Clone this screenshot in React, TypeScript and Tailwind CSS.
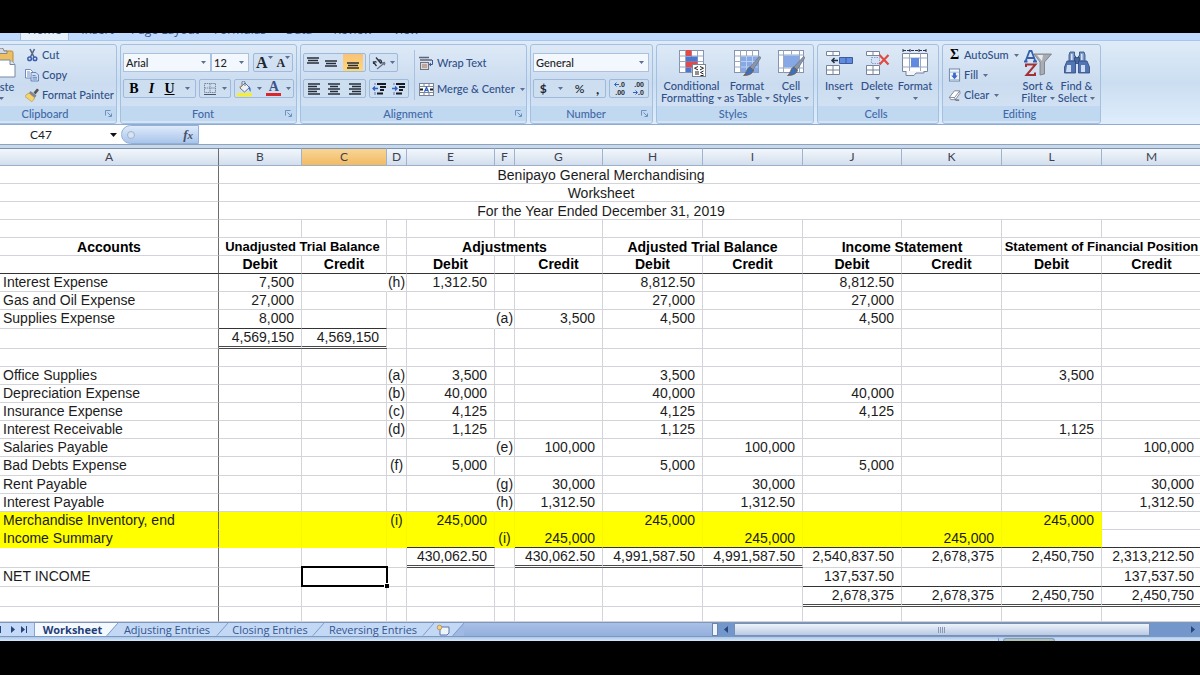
import React, { useState } from 'react';
import clsx from 'clsx';

type Col = 'A' | 'B' | 'C' | 'D' | 'E' | 'F' | 'G' | 'H' | 'I' | 'J' | 'K' | 'L' | 'M';

interface SheetRow {
  cells?: Partial<Record<Col, string>>;
  height?: string;
  highlight?: boolean;
  single?: string;
  double?: string;
  bold?: boolean;
  selected?: Col;
}

const COLUMNS: { id: Col; width: string }[] = [
  { id: 'A', width: 'w-[219px]' },
  { id: 'B', width: 'w-[83px]' },
  { id: 'C', width: 'w-[85px]' },
  { id: 'D', width: 'w-[20px]' },
  { id: 'E', width: 'w-[88px]' },
  { id: 'F', width: 'w-[20px]' },
  { id: 'G', width: 'w-[88px]' },
  { id: 'H', width: 'w-[100px]' },
  { id: 'I', width: 'w-[100px]' },
  { id: 'J', width: 'w-[99px]' },
  { id: 'K', width: 'w-[100px]' },
  { id: 'L', width: 'w-[100px]' },
  { id: 'M', width: 'w-[100px]' },
];

const TITLES = ['Benipayo General Merchandising', 'Worksheet', 'For the Year Ended December 31, 2019'];

const ROWS: SheetRow[] = [
  {
    cells: { B: 'Debit', C: 'Credit', E: 'Debit', G: 'Credit', H: 'Debit', I: 'Credit', J: 'Debit', K: 'Credit', L: 'Debit', M: 'Credit' },
    bold: true,
    single: 'ABCDEFGHIJKLM',
  },
  { cells: { A: 'Interest Expense', B: '7,500', D: '(h)', E: '1,312.50', H: '8,812.50', J: '8,812.50' } },
  { cells: { A: 'Gas and Oil Expense', B: '27,000', H: '27,000', J: '27,000' } },
  { cells: { A: 'Supplies Expense', B: '8,000', F: '(a)', G: '3,500', H: '4,500', J: '4,500' }, height: 'h-[19px]', single: 'BC' },
  { cells: { B: '4,569,150', C: '4,569,150' }, height: 'h-[20px]', double: 'BC' },
  { height: 'h-[18px]' },
  { cells: { A: 'Office Supplies', D: '(a)', E: '3,500', H: '3,500', L: '3,500' } },
  { cells: { A: 'Depreciation Expense', D: '(b)', E: '40,000', H: '40,000', J: '40,000' } },
  { cells: { A: 'Insurance Expense', D: '(c)', E: '4,125', H: '4,125', J: '4,125' } },
  { cells: { A: 'Interest Receivable', D: '(d)', E: '1,125', H: '1,125', L: '1,125' } },
  { cells: { A: 'Salaries Payable', F: '(e)', G: '100,000', I: '100,000', M: '100,000' } },
  { cells: { A: 'Bad Debts Expense', D: '(f)', E: '5,000', H: '5,000', J: '5,000' }, height: 'h-[19px]' },
  { cells: { A: 'Rent Payable', F: '(g)', G: '30,000', I: '30,000', M: '30,000' } },
  { cells: { A: 'Interest Payable', F: '(h)', G: '1,312.50', I: '1,312.50', M: '1,312.50' } },
  { cells: { A: 'Merchandise Inventory, end', D: '(i)', E: '245,000', H: '245,000', L: '245,000' }, highlight: true },
  { cells: { A: 'Income Summary', F: '(i)', G: '245,000', I: '245,000', K: '245,000' }, highlight: true, single: 'EGHIJKLM' },
  {
    cells: { E: '430,062.50', G: '430,062.50', H: '4,991,587.50', I: '4,991,587.50', J: '2,540,837.50', K: '2,678,375', L: '2,450,750', M: '2,313,212.50' },
    height: 'h-[20px]',
    double: 'EGHI',
  },
  { cells: { A: 'NET INCOME', J: '137,537.50', M: '137,537.50' }, height: 'h-[19px]', single: 'JKLM', selected: 'C' },
  { cells: { J: '2,678,375', K: '2,678,375', L: '2,450,750', M: '2,450,750' }, height: 'h-[20px]', double: 'JKLM' },
  { height: 'h-[15px]' },
];

const Caret: React.FC<{ className?: string }> = ({ className }) => (
  <svg viewBox="0 0 5 3" className={clsx('w-[5px] h-[3px] shrink-0', className)} fill="#5b6f91">
    <path d="M0 0h5L2.5 3z" />
  </svg>
);

/* ---------- icons ---------- */

const CutIcon = () => (
  <svg viewBox="0 0 14 14" className="w-[14px] h-[14px]" fill="none">
    <path d="M5 1l4 8M9.500 1L5.500 9" stroke="#56678c" strokeWidth="1.600" />
    <circle cx="4.600" cy="10.800" r="1.800" stroke="#3a5fae" strokeWidth="1.500" />
    <circle cx="10" cy="10.800" r="1.800" stroke="#3a5fae" strokeWidth="1.500" />
  </svg>
);

const CopyIcon = () => (
  <svg viewBox="0 0 14 14" className="w-[14px] h-[14px]" stroke="#5f7db5" strokeWidth=".9">
    <path d="M.5 1.500h5l2 2V10h-7z" fill="#fff" />
    <path d="M2 4h3M2 6h3M2 8h3" />
    <path d="M6 4.500h5l2.500 2.500V13H6z" fill="#cfe0f8" />
    <path d="M7.500 7.500h3M7.500 9.300h4.500M7.500 11h4.500" />
  </svg>
);

const PainterIcon = () => (
  <svg viewBox="0 0 14 14" className="w-[14px] h-[14px]">
    <path d="M8.500 4.500L12 .5l2 1.500-3.500 4.500z" fill="#5d5148" />
    <path d="M5.500 3l6 4.500-1.800 2.500-6-4.500z" fill="#7d879c" />
    <path d="M4 5L1.500 6.500 0 8.500l6.500 5c1.500-.6 2.700-2 3-3.800z" fill="#f5d470" stroke="#b58a30" strokeWidth=".6" />
  </svg>
);

const PasteIcon = () => (
  <svg viewBox="0 0 30 30" className="w-[30px] h-[30px]">
    <rect x="2" y="3" width="25" height="23" rx="1.500" fill="#ecbf62" stroke="#b98d3f" />
    <path d="M9 5.500V3h3a3 3 0 016 0h3v2.500z" fill="#d5d8de" stroke="#6e7684" strokeWidth=".8" />
    <path d="M12 12h12l5 4.500V29H12z" fill="#fff" stroke="#7688a6" />
    <path d="M24 12v4.500h5" fill="#dbe6f5" stroke="#7688a6" />
  </svg>
);

const Lines: React.FC<{ rows: [number, number, number][] }> = ({ rows }) => (
  <svg viewBox="0 0 14 14" className="w-[14px] h-[14px]" stroke="#262c38" strokeWidth="1.400">
    {rows.map(([x1, x2, y]) => (
      <path key={y} d={`M${x1} ${y}H${x2}`} />
    ))}
  </svg>
);

const OrientationIcon = () => (
  <svg viewBox="0 0 14 14" className="w-[14px] h-[14px]" fill="none" stroke="#2c3340" strokeWidth="1.300">
    <path d="M1 5.500l3.500 4.500M1.500 8c0-2.500 2-3 3-1.500M4 1.500l5 6M6.500 4.500c2-1.500 4 .5 2.500 3" />
    <path d="M5 13L13 6.500M13 6.500l-3 .3M13 6.500l-.8 2.800" stroke="#6b7486" />
  </svg>
);

const IndentIcon: React.FC<{ flip?: boolean }> = ({ flip }) => (
  <svg viewBox="0 0 15 14" className="w-[15px] h-[14px]" fill="none" stroke="#171b25" strokeWidth="1.800">
    <path d="M5 2h9M8 5h6M8 8h4M5 11.500h6" />
    <path d={flip ? 'M1 6.500h5M4 4.500l2 2-2 2' : 'M6 6.500H1M3 4.500l-2 2 2 2'} stroke="#2f5fc0" strokeWidth="1.300" />
    <path d="M3 1v2M3 10v3" stroke="#5b79b5" strokeWidth="1" />
  </svg>
);

const WrapIcon = () => (
  <svg viewBox="0 0 15 15" className="w-[15px] h-[15px]" fill="none">
    <path d="M0 1.500h10M1 4h12" stroke="#5d6679" strokeWidth="1.500" />
    <rect x="1.500" y="6.500" width="8" height="7" fill="#e3d8d0" stroke="#6b7486" />
    <path d="M3 9h5M3 11h5" stroke="#95776c" />
    <path d="M13.500 4v4.500h-3M12 7l-1.800 1.500L12 10" stroke="#3a5796" />
  </svg>
);

const MergeIcon = () => (
  <svg viewBox="0 0 15 15" className="w-[15px] h-[15px]" fill="none">
    <rect x=".5" y="1.500" width="14" height="12" fill="#fff" stroke="#7a8499" />
    <path d="M.5 4.500h14M.5 10.500h14M5 1.500v3M10 1.500v3M5 10.500v3M10 10.500v3" stroke="#7a8499" />
    <path d="M1 7.500h3M14 7.500h-3" stroke="#171b25" strokeWidth="2" />
    <path d="M5.500 9.800l2-4.500 2 4.500M6.300 8.300h2.400" stroke="#2f5fc0" strokeWidth="1.200" />
  </svg>
);

const BordersIcon = () => (
  <svg viewBox="0 0 14 14" className="w-[14px] h-[14px]" fill="none">
    <path d="M1.500 1.500h11v9h-11zM7 1.500v9M1.500 6h11" stroke="#7c879b" strokeDasharray="1.500 .7" />
    <path d="M1 12.500h12" stroke="#4b5468" strokeWidth="1.200" />
  </svg>
);

const FillColorIcon = () => (
  <svg viewBox="0 0 15 16" className="w-[15px] h-[16px]">
    <rect x="0" y="12" width="15" height="3.500" fill="#f4ee3a" />
    <path d="M3 7l5-5 4.500 4.500-5 4.500z" fill="#eef2f8" stroke="#68758f" />
    <path d="M5 5V1.500a1.500 1.500 0 013 0V5" fill="none" stroke="#68758f" />
    <path d="M11.500 5c2 1 2.500 3 2 6-1-1.500-1.800-2.800-2-6z" fill="#3d6bb8" />
    <path d="M2 6c2-2 3-1 5-3L3 7z" fill="#c79c3c" />
  </svg>
);

const SigmaIcon = () => <span className="w-[13px] text-center text-[14px] leading-[14px] font-bold text-black font-['Liberation_Serif',serif]">Σ</span>;

const FillDownIcon = () => (
  <svg viewBox="0 0 14 14" className="w-[13px] h-[14px]">
    <rect x="1.500" y=".5" width="11" height="13" fill="#eef5fd" stroke="#6a80a5" />
    <path d="M2 4h10M2 12h10" stroke="#a9bcd8" />
    <path d="M5.500 4.500h3V7.500h2L7 11.500 3.500 7.500h2z" fill="#3c69ce" />
  </svg>
);

const EraserIcon = () => (
  <svg viewBox="0 0 14 14" className="w-[13px] h-[14px]">
    <path d="M1.500 9.500L7 2.500h5.500L13 5l-5 7H3z" fill="#fff" stroke="#6b7587" strokeWidth=".9" />
    <path d="M1.500 9.500l5.500.3 5.500-7M7 9.800L8 12" fill="none" stroke="#6b7587" strokeWidth=".9" />
    <path d="M8 12.500h4" stroke="#333" />
  </svg>
);

const GridBase = () => (
  <>
    <rect x="1.500" y="1.500" width="24" height="22" fill="#fff" stroke="#8594b0" />
    <path d="M7.500 1.500v22M13.500 1.500v22M19.500 1.500v22M1.500 7h24M1.500 12.500h24M1.500 18h24" stroke="#9aa8c2" />
  </>
);

const Brush = () => (
  <>
    <path d="M26.500 7.500l1.500 1-8 12.500-3.500-2.500z" fill="#8b95a8" stroke="#5f6a80" strokeWidth=".6" />
    <path d="M16.500 18l4 3c-.5 3.500-4 5.500-10 5.500 3-1.500 2.500-6.500 6-8.500z" fill="#3f6fb9" stroke="#7e5a34" strokeWidth=".8" />
  </>
);

const ConditionalIcon = () => (
  <svg viewBox="0 0 28 28" className="w-7 h-7">
    <GridBase />
    <path d="M8 1h5.500v6H8zM8 12.500h11.500v6H8z" fill="#e04a4a" />
    <path d="M8 7.500h11.500v5H8zM8 18.500h5V23H8z" fill="#4d76cf" />
    <rect x="14.500" y="15.500" width="13" height="12" fill="#fff" stroke="#7b8496" />
    <path d="M20 17.500l-3.500 1.700 3.500 1.700M22 17.500l3.500 1.700-3.500 1.700M17 23h4M17 25h4M25.500 22l-3 1.500 3 1.500M22.500 26.500h3" fill="none" stroke="#222" strokeWidth="1" />
  </svg>
);

const TableIcon = () => (
  <svg viewBox="0 0 28 28" className="w-7 h-7">
    <GridBase />
    <path d="M8 7.500h17.500v16H8z" fill="#86a9e6" />
    <path d="M13.500 7v17M19.500 7v17M8 12.500h17M8 18h17" stroke="#b9cff2" />
    <Brush />
  </svg>
);

const CellStylesIcon = () => (
  <svg viewBox="0 0 28 28" className="w-7 h-7">
    <rect x="1.500" y="1.500" width="25" height="22" fill="#fff" stroke="#8594b0" />
    <path d="M6.500 1.500v22M22.500 1.500v22M1.500 6h25M1.500 19h25M14.500 1.500v4M14.500 19v4" stroke="#9aa8c2" />
    <path d="M7 6.500h15v12H7z" fill="#86a9e6" />
    <Brush />
  </svg>
);

const InsertIcon = () => (
  <svg viewBox="0 0 28 28" className="w-7 h-7">
    <path d="M1.500 2.500h13v4h-13zM8 2.500v4M1.500 16.500h13v9h-13zM8 16.500v9M1.500 21h13" fill="#fff" stroke="#78849b" />
    <path d="M14.500 8.500h13v6h-13z" fill="#5f8be0" stroke="#3c5a9c" />
    <path d="M21 9v5.500" stroke="#3c5a9c" />
    <path d="M13 11.500H6.500M9.500 9L7 11.500 9.500 14" fill="none" stroke="#26304a" strokeWidth="1.500" />
  </svg>
);

const DeleteIcon = () => (
  <svg viewBox="0 0 28 28" className="w-7 h-7">
    <path d="M3.500 2.500h13v4h-13zM10 2.500v4M3.500 16.500h13v9h-13zM10 16.500v9M3.500 21h13" fill="#fff" stroke="#78849b" />
    <path d="M8.500 8.500h8v6h-8z" fill="#d5e2f5" stroke="#8ba0c4" strokeDasharray="1.500 1" />
    <path d="M16.500 6l9 9.500M25.500 6l-9 9.500" stroke="#e2493f" strokeWidth="2.200" />
  </svg>
);

const FormatIcon = () => (
  <svg viewBox="0 0 28 28" className="w-7 h-7">
    <path d="M2 1.500h23M2 0v3M25 0v3M9 0v3M18 0v3" stroke="#26304a" strokeDasharray="3 1" />
    <path d="M1.500 4.500h25v18h-25z" fill="#fff" stroke="#78849b" />
    <path d="M8.500 4.500v18M19.500 4.500v18M1.500 9h25M1.500 18h25" stroke="#9aa8c2" />
    <rect x="10" y="9" width="8" height="9" fill="#5f8be0" />
    <path d="M5 22v4.500h8l2-2.500h8v-2" fill="#f4f6fa" stroke="#78849b" />
  </svg>
);

const SortIcon = () => (
  <svg viewBox="0 0 28 28" className="w-7 h-7">
    <path d="M10 5h17.500L20.500 13v12l-4.500 1V13z" fill="#a9acb2" stroke="#72767e" strokeWidth=".8" />
    <path d="M13 6h6l-1 6z" fill="#e8eaee" />
    <path d="M1.500 12.500L5.500 2h2L11.500 12.500M3.500 9h7M0 12.500h3.500M9 12.500h4" fill="none" stroke="#3560ab" strokeWidth="1.800" />
    <path d="M2 18v-2.500h9.500L2.500 26H11v-2.500" fill="none" stroke="#a33236" strokeWidth="2" />
  </svg>
);

const FindIcon = () => (
  <svg viewBox="0 0 28 28" className="w-7 h-7" stroke="#2b467a" strokeWidth=".8">
    <path d="M7 3h4.500v4h1v6H6V6zM16.500 3H21l1 3v7h-6.500V7h1z" fill="#7b98cb" />
    <path d="M11.500 8.500h5v6h-5z" fill="#4a689f" />
    <path d="M4 12h8.500v12H1.500V18zM24 12h-8.500v12h11V18z" fill="#5175b4" />
    <path d="M4 16h4v7H3zM18 16h4v7h-4z" fill="#cddcf3" stroke="none" />
    <path d="M8 5h1.500v6H8zM18 5h1.500v6H18z" fill="#dbe6f7" stroke="none" />
  </svg>
);

const LauncherIcon = () => (
  <svg viewBox="0 0 7 7" className="w-[7px] h-[7px]" fill="none" stroke="#6f8fbd">
    <path d="M.5 5.500v-5h5M2.500 2.500l3.500 3.500M6.500 3.500v3h-3" />
  </svg>
);

/* ---------- ribbon ---------- */

const Group: React.FC<{ title: string; className: string; launcher?: boolean; children: React.ReactNode }> = ({ title, className, launcher, children }) => (
  <section
    aria-label={title}
    className={clsx('shrink-0 flex flex-col rounded-[3px] border border-[#a3c0e0] bg-linear-to-b from-[#dde9f6] via-[#cbdcf0] to-[#d6e5f5] overflow-hidden', className)}
  >
    <div className="h-[61px] flex">{children}</div>
    <div className="h-[15px] flex items-center bg-[#c1d8f1] text-[#4268a6] pr-1">
      <span className="flex-1 text-center">{title}</span>
      {launcher && (
        <button aria-label={`${title} settings`}>
          <LauncherIcon />
        </button>
      )}
    </div>
  </section>
);

const Box: React.FC<{ className: string; children: React.ReactNode }> = ({ className, children }) => (
  <div className={clsx('h-[19px] flex items-center justify-around rounded-[2px] border border-[#9fb9da] bg-[#cfdff2]/60', className)}>{children}</div>
);

const SmallButton: React.FC<{ icon: React.ReactNode; label: string; caret?: boolean }> = ({ icon, label, caret }) => (
  <button className="h-5 flex items-center gap-[3px] whitespace-nowrap">
    {icon}
    {label}
    {caret && <Caret className="ml-[2px]" />}
  </button>
);

const BigButton: React.FC<{ icon: React.ReactNode; first: string; second?: string; className: string }> = ({ icon, first, second, className }) => (
  <button className={clsx('shrink-0 flex flex-col items-center pt-1 whitespace-nowrap leading-[12px]', className)}>
    {icon}
    <span className="mt-[3px]">{first}</span>
    <span className="h-3 flex items-center gap-[3px]">
      {second}
      <Caret />
    </span>
  </button>
);

const Picker: React.FC<{ label: string; options: string[]; className: string }> = ({ label, options, className }) => (
  <div className={clsx('relative h-[19px]', className)}>
    <select aria-label={label} className="w-full h-full appearance-none border border-[#abc1de] bg-[#f3f8fe] pl-[2px] text-[11px] leading-4 text-[#222] outline-none">
      {options.map((option) => (
        <option key={option}>{option}</option>
      ))}
    </select>
    <Caret className="absolute right-[5px] top-2 pointer-events-none" />
  </div>
);

const Ribbon = () => (
  <div className="h-[83px] flex gap-[3px] pt-[3px] overflow-hidden bg-linear-to-b from-[#dfebf7] via-[#cbdef1] to-[#dfedfb] text-[11px] leading-[14px] font-medium text-[#2f5088] font-['Lato','Open_Sans',sans-serif]">
    <Group title="Clipboard" launcher className="-ml-4 w-[133px]">
      <button className="w-8 flex flex-col items-center pt-[3px]">
        <PasteIcon />
        <span className="mt-[3px] leading-[12px]">Paste</span>
        <Caret className="mt-1" />
      </button>
      <div className="flex flex-col pl-2">
        <SmallButton icon={<CutIcon />} label="Cut" />
        <SmallButton icon={<CopyIcon />} label="Copy" />
        <SmallButton icon={<PainterIcon />} label="Format Painter" />
      </div>
    </Group>

    <Group title="Font" launcher className="w-[177px]">
      <div className="flex flex-col gap-[7px] pl-[2px] pt-2">
        <div className="flex">
          <Picker label="Font family" options={['Arial', 'Calibri']} className="w-[88px]" />
          <Picker label="Font size" options={['12', '14']} className="w-[38px]" />
          <Box className="ml-1 w-10 font-['Liberation_Serif',serif] font-bold text-[#22262f]">
            <button aria-label="Grow font" className="flex text-[16px]">
              A<Caret />
            </button>
            <button aria-label="Shrink font" className="flex text-[12px]">
              A<Caret />
            </button>
          </Box>
        </div>
        <div className="flex gap-[3px]">
          <Box className="w-[73px] font-['Liberation_Serif',serif] text-[14px] font-bold text-black">
            <button>B</button>
            <button className="italic">I</button>
            <button className="underline">U</button>
            <Caret />
          </Box>
          <Box className="w-8">
            <button aria-label="Borders"><BordersIcon /></button>
            <Caret />
          </Box>
          <Box className="w-[60px]">
            <button aria-label="Fill color"><FillColorIcon /></button>
            <Caret />
            <button className="w-[15px] border-b-[3px] border-[#d8262c] font-['Liberation_Serif',serif] text-[14px] leading-[12px] font-bold text-[#3b5388]">A</button>
            <Caret />
          </Box>
        </div>
      </div>
    </Group>

    <Group title="Alignment" launcher className="w-[227px]">
      <div className="flex flex-col gap-[7px] pl-[2px] pt-2">
        <div className="flex gap-[3px]">
          <Box className="w-[63px]">
            <button aria-label="Top align"><Lines rows={[[1, 13, 2], [2, 12, 4.500], [1, 13, 7]]} /></button>
            <button aria-label="Middle align"><Lines rows={[[1, 13, 5], [2, 12, 7.500], [1, 13, 10]]} /></button>
            <button aria-label="Bottom align" className="h-[17px] w-5 flex items-center justify-center bg-linear-to-b from-[#f9c27a] to-[#fdd878]">
              <Lines rows={[[1, 13, 7], [2, 12, 9.500], [1, 13, 12]]} />
            </button>
          </Box>
          <Box className="w-[29px]">
            <button aria-label="Orientation"><OrientationIcon /></button>
            <Caret />
          </Box>
        </div>
        <div className="flex gap-[3px]">
          <Box className="w-[63px]">
            <button aria-label="Align left"><Lines rows={[[1, 13, 2], [1, 10, 4.500], [1, 13, 7], [1, 10, 9.500], [1, 13, 12]]} /></button>
            <button aria-label="Center"><Lines rows={[[1, 13, 2], [3, 11, 4.500], [1, 13, 7], [3, 11, 9.500], [1, 13, 12]]} /></button>
            <button aria-label="Align right"><Lines rows={[[1, 13, 2], [4, 13, 4.500], [1, 13, 7], [4, 13, 9.500], [1, 13, 12]]} /></button>
          </Box>
          <Box className="w-10">
            <button aria-label="Decrease indent"><IndentIcon /></button>
            <button aria-label="Increase indent"><IndentIcon flip /></button>
          </Box>
        </div>
      </div>
      <div className="ml-[5px] mt-[5px] h-[50px] border-l border-[#a9c1de]" />
      <div className="flex flex-col gap-[6px] pl-1 pt-2">
        <SmallButton icon={<WrapIcon />} label="Wrap Text" />
        <SmallButton icon={<MergeIcon />} label="Merge & Center" caret />
      </div>
    </Group>

    <Group title="Number" launcher className="w-[123px]">
      <div className="flex flex-col gap-[7px] pl-[2px] pt-2">
        <Picker label="Number format" options={['General', 'Currency']} className="w-[116px]" />
        <div className="flex gap-[3px] text-[#22262f]">
          <Box className="w-[73px]">
            <button className="font-bold text-[12px]">$</button>
            <Caret />
            <button className="text-[12px]">%</button>
            <button className="font-bold text-[14px]">,</button>
          </Box>
          <Box className="w-10 text-[7px] font-bold leading-[8px] font-['Liberation_Sans',sans-serif]">
            <button aria-label="Increase decimal" className="flex flex-col items-end">
              <span className="flex items-center">
                <svg viewBox="0 0 5 5" className="size-[5px]" fill="none" stroke="#2f5fc0"><path d="M5 2.500H1M2.500 .5l-2 2 2 2" /></svg>
                .0
              </span>
              <span>.00</span>
            </button>
            <button aria-label="Decrease decimal" className="flex flex-col items-end">
              <span>.00</span>
              <span className="flex items-center">
                <svg viewBox="0 0 5 5" className="size-[5px]" fill="none" stroke="#2f5fc0"><path d="M0 2.500h4M2.500 .5l2 2-2 2" /></svg>
                .0
              </span>
            </button>
          </Box>
        </div>
      </div>
    </Group>

    <Group title="Styles" className="w-[158px]">
      <div className="flex pl-1">
        <BigButton icon={<ConditionalIcon />} first="Conditional" second="Formatting" className="w-[61px]" />
        <BigButton icon={<TableIcon />} first="Format" second="as Table" className="w-[50px]" />
        <BigButton icon={<CellStylesIcon />} first="Cell" second="Styles" className="w-[38px]" />
      </div>
    </Group>

    <Group title="Cells" className="w-[122px]">
      <div className="flex pl-[2px]">
        <BigButton icon={<InsertIcon />} first="Insert" className="w-[38px]" />
        <BigButton icon={<DeleteIcon />} first="Delete" className="w-[38px]" />
        <BigButton icon={<FormatIcon />} first="Format" className="w-[38px]" />
      </div>
    </Group>

    <Group title="Editing" className="w-[159px]">
      <div className="w-[76px] shrink-0 flex flex-col pl-[5px]">
        <SmallButton icon={<SigmaIcon />} label="AutoSum" caret />
        <SmallButton icon={<FillDownIcon />} label="Fill" caret />
        <SmallButton icon={<EraserIcon />} label="Clear" caret />
      </div>
      <BigButton icon={<SortIcon />} first="Sort &" second="Filter" className="w-[38px]" />
      <BigButton icon={<FindIcon />} first="Find &" second="Select" className="w-[39px]" />
    </Group>
  </div>
);

const RibbonTabs = () => (
  <nav className="h-2 flex items-end overflow-hidden border-b border-[#a9c6ea] bg-[#bfdafc] text-[12px] leading-[21px] text-[#3c5c94]">
    <button className="ml-[20px] w-[49px] bg-[#e6f0fb] border-x border-[#9dbbe0]">Home</button>
    <button className="w-[57px]">Insert</button>
    <button className="w-[78px]">Page Layout</button>
    <button className="w-[72px]">Formulas</button>
    <button className="w-[46px]">Data</button>
    <button className="w-[62px]">Review</button>
    <button className="w-[44px]">View</button>
  </nav>
);

const FormulaBar = () => {
  const [formula, setFormula] = useState('');
  return (
    <div className="h-[20px] flex border-b border-[#8ea3bf] bg-white">
      <div className="w-[121px] flex items-center pr-1">
        <input aria-label="Name box" defaultValue="C47" className="flex-1 min-w-0 pr-7 text-center text-[12px] text-[#222] outline-none font-['Lato',sans-serif]" />
        <svg viewBox="0 0 7 4" className="w-[7px] h-1" fill="#111">
          <path d="M0 0h7L3.500 4z" />
        </svg>
      </div>
      <div className="w-[78px] flex items-center justify-between rounded-l-full border border-[#93b1da] bg-linear-to-b from-[#dfeafa] to-[#a9c5ea] pl-[5px] pr-[5px]">
        <span className="size-2 rounded-full border border-[#9db3d3] bg-[#d8e2f0]" />
        <button className="italic text-[13px] leading-4 font-bold text-[#44506b] font-['Liberation_Serif',serif]">
          f<span className="text-[11px]">x</span>
        </button>
      </div>
      <input aria-label="Formula" value={formula} onChange={(e) => setFormula(e.target.value)} className="flex-1 min-w-0 px-2 text-[12px] outline-none" />
    </div>
  );
};

/* ---------- sheet ---------- */

const GRID = 'border-[#d3d3da]';

const rightBorder = (id: Col, nextText: string | undefined, yellow: boolean) => {
  if (id === 'A') return 'border-r border-r-[#6d6d6d]';
  if (yellow) return 'border-r border-r-[#f8f800]';
  // wide references spill over the line on their left
  if (nextText === '(h)' || (id === 'E' && nextText?.startsWith('('))) return 'border-r border-r-transparent';
  return 'border-r border-r-[#d3d3da]';
};

const Sheet = () => (
  <div className="overflow-hidden bg-white">
    <table className="w-[1202px] table-fixed border-separate border-spacing-0 text-[14px] leading-[16px] text-[#1c1c1c] whitespace-nowrap font-['Liberation_Sans',Arial,sans-serif]">
      <colgroup>
        {COLUMNS.map((col) => (
          <col key={col.id} className={col.width} />
        ))}
      </colgroup>
      <thead>
        <tr className="h-[18px] text-[12px] leading-4 text-[#3c4350] font-['Lato','Open_Sans',sans-serif]">
          {COLUMNS.map((col) => (
            <th
              key={col.id}
              scope="col"
              className={clsx(
                'p-0 font-normal border-y border-r border-t-[#7d93b1] border-b-[#9db0c9]',
                col.id === 'A' ? 'border-r-[#6d6d6d]' : 'border-r-[#9eb3cd]',
                col.id === 'C' ? 'bg-linear-to-b from-[#f8d596] to-[#f2bb62]' : 'bg-linear-to-b from-[#f3f7fc] to-[#d3deed]'
              )}
            >
              {col.id}
            </th>
          ))}
        </tr>
      </thead>
      <tbody>
        {TITLES.map((title) => (
          <tr key={title} className="h-[18px]">
            <td className={clsx('p-0 border-b border-r', GRID, 'border-r-[#6d6d6d]')} />
            <td colSpan={12} className={clsx('p-0 pr-[219px] text-center border-b', GRID)}>{title}</td>
          </tr>
        ))}
        <tr className="h-[18px]">
          {COLUMNS.map((col) => (
            <td key={col.id} className={clsx('p-0 border-b border-b-[#d3d3da]', rightBorder(col.id, undefined, false))} />
          ))}
        </tr>
        <tr className="h-[18px] font-bold text-center text-black">
          <td className={clsx('p-0 border-b border-r', GRID, 'border-r-[#6d6d6d]')}>Accounts</td>
          <td colSpan={2} className={clsx('p-0 text-[13px] border-b border-r', GRID)}>Unadjusted Trial Balance</td>
          <td className={clsx('p-0 border-b border-r', GRID)} />
          <td colSpan={3} className={clsx('p-0 border-b border-r', GRID)}>Adjustments</td>
          <td colSpan={2} className={clsx('p-0 border-b border-r', GRID)}>Adjusted Trial Balance</td>
          <td colSpan={2} className={clsx('p-0 border-b border-r', GRID)}>Income Statement</td>
          <td colSpan={2} className={clsx('p-0 text-[13px] border-b border-r', GRID)}>Statement of Financial Position</td>
        </tr>
        {ROWS.map((row, r) => (
          <tr key={r} className={row.height ?? 'h-[18px]'}>
            {COLUMNS.map(({ id }, c) => {
              const text = row.cells?.[id];
              const next = COLUMNS[c + 1] && row.cells?.[COLUMNS[c + 1].id];
              const yellow = !!row.highlight && id !== 'M';
              return (
                <td
                  key={id}
                  className={clsx(
                    'py-0 align-top',
                    rightBorder(id, next, yellow),
                    row.double?.includes(id)
                      ? 'border-b-[3px] border-b-[#4a4a4a] [border-bottom-style:double]'
                      : row.single?.includes(id)
                        ? 'border-b border-b-[#333]'
                        : yellow
                          ? 'border-b border-b-[#ffff00]'
                          : 'border-b border-b-[#d3d3da]',
                    yellow && 'bg-[#ffff00]',
                    row.bold
                      ? 'px-0 text-center font-bold text-black'
                      : id === 'A'
                        ? 'pl-[3px] pr-0 text-left'
                        : id === 'D' || id === 'F'
                          ? 'px-0 text-center'
                          : 'pl-0 pr-[7px] text-right',
                    row.selected === id && 'relative'
                  )}
                >
                  {text}
                  {row.selected === id && (
                    <div className="absolute -top-[2px] -left-[1px] -right-[2px] -bottom-[1px] border-[2px] border-black">
                      <span className="absolute -right-[3px] -bottom-[3px] size-[5px] border-l border-t border-white bg-black" />
                    </div>
                  )}
                </td>
              );
            })}
          </tr>
        ))}
      </tbody>
    </table>
  </div>
);

/* ---------- bottom bar ---------- */

const Slant: React.FC<{ from: string; to: string }> = ({ from, to }) => (
  <svg viewBox="0 0 12 14" preserveAspectRatio="none" className="w-3 h-full shrink-0">
    <path d="M0 0h12L0 14z" fill={from} />
    <path d="M12 0v14H0z" fill={to} />
    <path d="M12 0L1 13.500" stroke="#7f9cc8" fill="none" />
  </svg>
);

const SheetTabs = () => (
  <div className="h-[15px] flex border-t border-b border-[#7f97bb] bg-linear-to-b from-[#a9c0e6] to-[#93afdc] text-[11px] leading-[13px] text-[#33568f]">
    <div className="w-[35px] flex items-center justify-between pr-[6px] bg-[#c5daf6] border-r border-[#8aa5cd]">
      <button aria-label="Previous sheet">
        <svg viewBox="0 0 4 7" className="w-1 h-[7px]" fill="#27457f"><path d="M0 0h1v7H0z" /></svg>
      </button>
      <button aria-label="Next sheet">
        <svg viewBox="0 0 4 7" className="w-1 h-[7px]" fill="#27457f"><path d="M0 0l4 3.500L0 7z" /></svg>
      </button>
      <button aria-label="Last sheet">
        <svg viewBox="0 0 7 7" className="w-[7px] h-[7px]" fill="#27457f"><path d="M0 0l4 3.500L0 7zM5 0h1v7H5z" /></svg>
      </button>
    </div>
    <button className="w-[71px] pl-1 bg-[#f4f9ff] font-bold text-[#1f3f78]">Worksheet</button>
    <Slant from="#f4f9ff" to="#c3d8f5" />
    <button className="w-[98px] bg-[#c3d8f5]">Adjusting Entries</button>
    <Slant from="#c3d8f5" to="#c3d8f5" />
    <button className="w-[84px] bg-[#c3d8f5]">Closing Entries</button>
    <Slant from="#c3d8f5" to="#c3d8f5" />
    <button className="w-[98px] bg-[#c3d8f5]">Reversing Entries</button>
    <Slant from="#c3d8f5" to="#c3d8f5" />
    <button aria-label="Insert worksheet" className="w-[18px] flex items-center justify-center bg-[#c3d8f5]">
      <svg viewBox="0 0 14 12" className="w-[14px] h-3">
        <path d="M4 3h9v6l-2 2H4z" fill="#eef4fc" stroke="#5a76a8" />
        <circle cx="3.500" cy="3.500" r="2.300" fill="#f3cf7a" stroke="#a8863e" strokeWidth=".7" />
      </svg>
    </button>
    <Slant from="#c3d8f5" to="#a0b9e2" />
    <div className="w-[248px]" />
    <div className="w-[6px] border border-[#6a84ad] bg-[#eef5fd]" />
    <div className="flex-1 flex bg-[#7497cb]">
      <button aria-label="Scroll left" className="w-4 flex items-center justify-center">
        <svg viewBox="0 0 4 7" className="w-1 h-[7px]" fill="#27457f"><path d="M4 0L0 3.500 4 7z" /></svg>
      </button>
      <div className="flex-1">
        <div className="w-[92%] h-full flex items-center justify-center border border-[#7a8fb4] bg-linear-to-b from-[#eef3fa] to-[#b9cae4]">
          <svg viewBox="0 0 7 6" className="w-[7px] h-[6px]" stroke="#8a9ab5"><path d="M.5 0v6M2.500 0v6M4.500 0v6M6.500 0v6" /></svg>
        </div>
      </div>
      <button aria-label="Scroll right" className="w-[14px] flex items-center justify-center">
        <svg viewBox="0 0 4 7" className="w-1 h-[7px]" fill="#27457f"><path d="M0 0l4 3.500L0 7z" /></svg>
      </button>
    </div>
  </div>
);

const App: React.FC = () => (
  <div className="min-h-screen bg-black py-[33px] font-['Open_Sans','Noto_Sans',sans-serif]">
    <main className="bg-[#c4d9f2]">
      <RibbonTabs />
      <Ribbon />
      <div className="h-[1px] bg-[#8fabcf]" />
      <FormulaBar />
      <div className="h-[3px] bg-[#c9d9ec]" />
      <Sheet />
      <SheetTabs />
      <footer className="h-[4px] flex justify-end items-end bg-linear-to-b from-[#a9c8ec] to-[#d6e7f9]">
        <div className="w-[202px] h-[3px] flex border-l border-[#7f9fca] bg-[#c0d9f6] pl-1">
          <div className="w-[52px] rounded-t-[3px] border border-b-0 border-[#7f9fca] bg-[#b5bfae]" />
        </div>
      </footer>
    </main>
  </div>
);

export default App;
